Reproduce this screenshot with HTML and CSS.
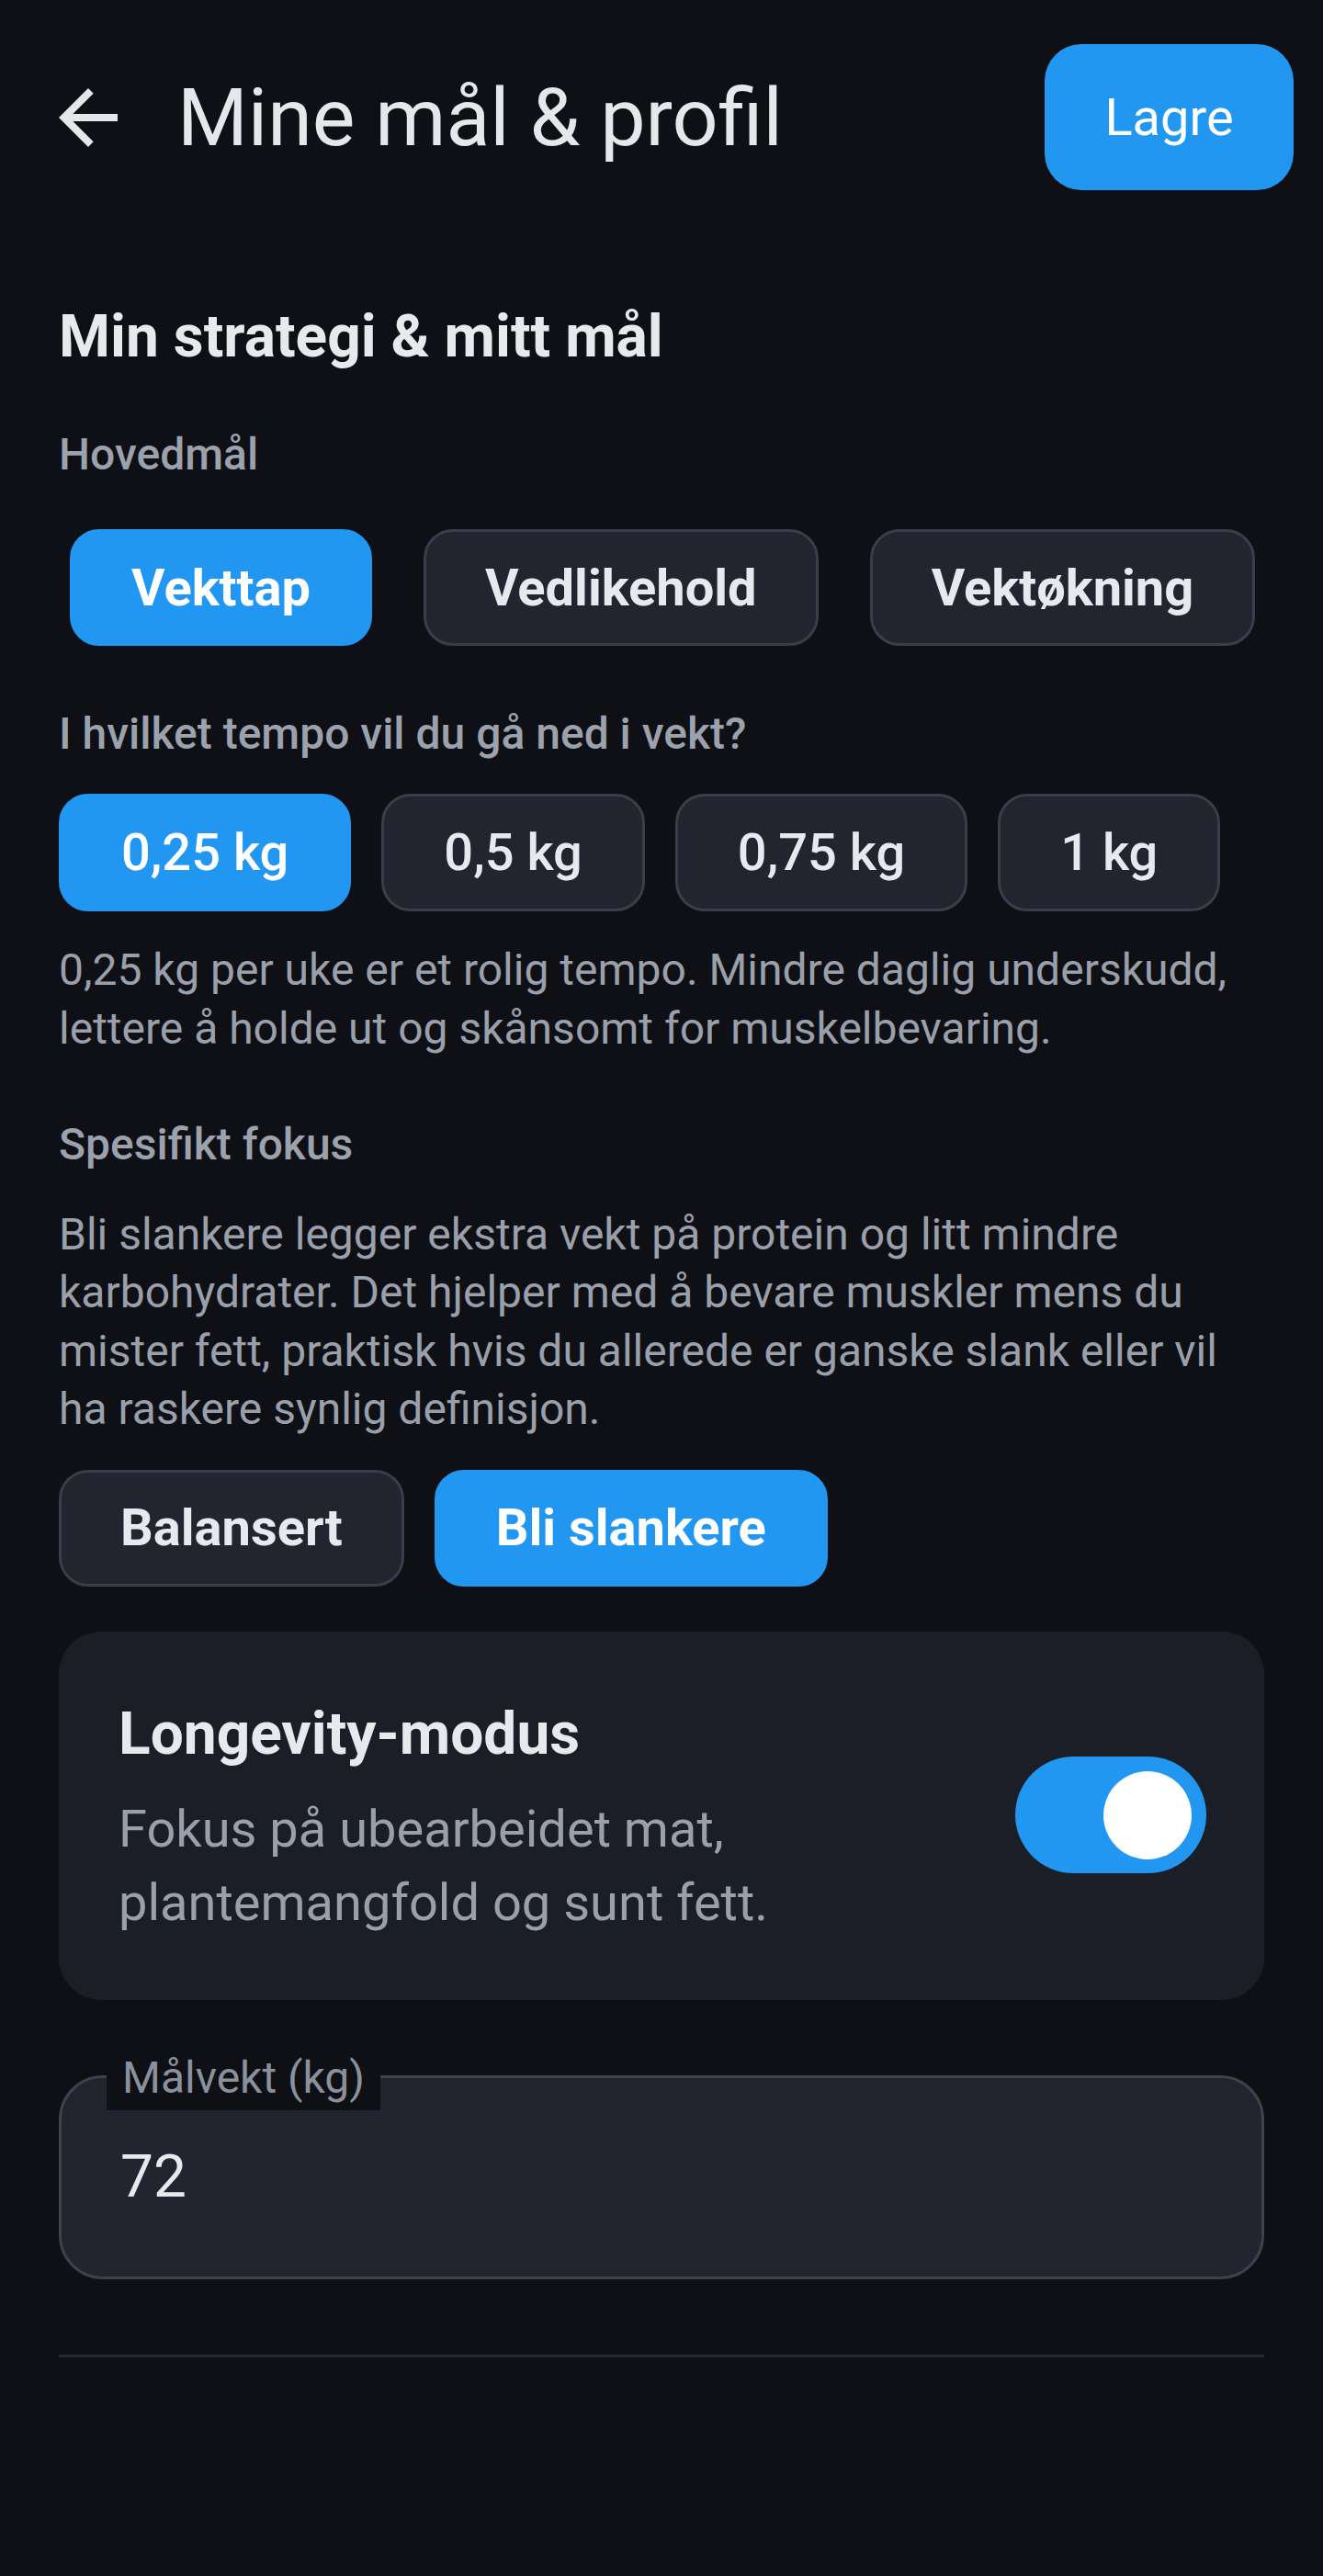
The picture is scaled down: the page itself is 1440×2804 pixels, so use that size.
FILE: index.html
```html
<!DOCTYPE html>
<html lang="no">
<head>
<meta charset="utf-8">
<title>Mine mål &amp; profil</title>
<link rel="stylesheet" href="styles.css">
</head>
<body>
<div class="screen">
  <header class="topbar">
    <button class="back" aria-label="Tilbake">
      <svg viewBox="0 0 24 24" width="96" height="96"><path fill="#e6e7eb" d="M20 11H7.83l5.59-5.59L12 4l-8 8 8 8 1.41-1.41L7.83 13H20v-2z"/></svg>
    </button>
    <h1 class="title">Mine mål &amp; profil</h1>
    <button class="save">Lagre</button>
  </header>

  <main class="content">
    <h2 class="section-title">Min strategi &amp; mitt mål</h2>

    <div class="label label-goal">Hovedmål</div>
    <div class="chips chips-goal">
      <button class="chip chip-bold selected">Vekttap</button>
      <button class="chip chip-bold">Vedlikehold</button>
      <button class="chip chip-bold">Vektøkning</button>
    </div>

    <div class="label label-tempo">I hvilket tempo vil du gå ned i vekt?</div>
    <div class="chips chips-tempo">
      <button class="chip chip-medium selected">0,25 kg</button>
      <button class="chip chip-medium">0,5 kg</button>
      <button class="chip chip-medium">0,75 kg</button>
      <button class="chip chip-medium">1 kg</button>
    </div>
    <p class="help help-tempo">0,25 kg per uke er et rolig tempo. Mindre daglig underskudd, lettere å holde ut og skånsomt for muskelbevaring.</p>

    <div class="label label-focus">Spesifikt fokus</div>
    <p class="help help-focus">Bli slankere legger ekstra vekt på protein og litt mindre karbohydrater. Det hjelper med å bevare muskler mens du mister fett, praktisk hvis du allerede er ganske slank eller vil ha raskere synlig definisjon.</p>
    <div class="chips chips-focus">
      <button class="chip chip-bold">Balansert</button>
      <button class="chip chip-bold selected">Bli slankere</button>
    </div>

    <section class="card">
      <div class="card-text">
        <h3 class="card-title">Longevity-modus</h3>
        <p class="card-desc">Fokus på ubearbeidet mat, plantemangfold og sunt fett.</p>
      </div>
      <div class="switch on"><span class="thumb"></span></div>
    </section>

    <div class="field">
      <span class="field-label">Målvekt (kg)</span>
      <span class="field-value">72</span>
    </div>

    <hr class="divider">
  </main>
</div>
</body>
</html>
```

FILE: styles.css
```css
* { box-sizing: border-box; }
html, body { margin: 0; padding: 0; }
body {
  background: #0f1015;
  font-family: Roboto, "Noto Sans", "Liberation Sans", sans-serif;
  color: #e8e9ed;
  width: 1440px;
  min-height: 2804px;
}
button { font-family: inherit; }

.topbar {
  display: flex;
  align-items: center;
  padding: 48px 32px 0 48px;
}
.back {
  width: 96px;
  height: 96px;
  padding: 0;
  border: 0;
  background: none;
  display: flex;
}
.title {
  flex: 1;
  margin: 0 0 0 49px;
  font-size: 88px;
  font-weight: 400;
  line-height: 102px;
  color: #e6e7eb;
  letter-spacing: 0;
}
.save {
  width: 271px;
  height: 159px;
  border: 0;
  border-radius: 40px;
  background: #2297f2;
  color: #ffffff;
  font-size: 56px;
  font-weight: 400;
  padding: 0;
}

.content {
  padding: 0 64px;
}
.section-title {
  margin: 122px 0 0;
  font-size: 64px;
  font-weight: 700;
  line-height: 76px;
  color: #e8e9ed;
}
.label {
  font-size: 48px;
  font-weight: 500;
  line-height: 56px;
  color: #9ba1ad;
}
.label-goal { margin-top: 62px; }
.label-tempo { margin-top: 68px; }
.label-focus { margin-top: 66px; }

.chips {
  display: flex;
}
.chips-goal { margin-top: 53px; padding-left: 12px; gap: 56px; }
.chips-tempo { margin-top: 37px; gap: 33px; }
.chips-focus { margin-top: 34px; gap: 33px; }

.chip {
  height: 127px;
  padding: 0 64px;
  border: 3px solid #3a3e4a;
  border-radius: 32px;
  background: #222530;
  color: #e8e9ee;
  font-size: 56px;
  line-height: 1;
  white-space: nowrap;
}
.chips-tempo .chip { height: 128px; }
.chip-bold { font-weight: 700; }
.chip-medium { font-weight: 500; padding: 0 65px; }
.chip.selected {
  background: #2297f2;
  border-color: #2297f2;
  color: #ffffff;
}

.help {
  margin: 0;
  font-size: 48px;
  font-weight: 400;
  color: #9aa0ab;
}
.help-tempo { margin-top: 32px; line-height: 64px; }
.help-focus { margin-top: 38px; line-height: 63.4px; }

.card {
  margin-top: 49px;
  background: #1b1e26;
  border-radius: 46px;
  padding: 75px 63px 66px 65px;
  display: flex;
  align-items: center;
  gap: 40px;
}
.card-text { flex: 1; }
.card-title {
  margin: 0;
  font-size: 64px;
  font-weight: 700;
  line-height: 74px;
  color: #e8e9ed;
}
.card-desc {
  margin: 26px 0 0;
  font-size: 56px;
  font-weight: 400;
  line-height: 80px;
  color: #9aa0ab;
}
.switch {
  width: 208px;
  height: 127px;
  border-radius: 64px;
  background: #2297f2;
  display: flex;
  align-items: center;
  justify-content: flex-end;
  padding-right: 16px;
  margin-bottom: 10px;
  flex: none;
}
.thumb {
  width: 96px;
  height: 96px;
  border-radius: 50%;
  background: #ffffff;
}

.field {
  position: relative;
  margin-top: 82px;
  height: 222px;
  border: 3px solid #3e424d;
  border-radius: 48px;
  background: #22252f;
  display: flex;
  align-items: center;
  padding-left: 64px;
}
.field-label {
  position: absolute;
  left: 49px;
  top: -28px;
  height: 63px;
  padding: 0 17px;
  background: #0f1015;
  font-size: 48px;
  line-height: 56px;
  color: #8a909c;
}
.field-value {
  font-size: 64px;
  font-weight: 400;
  color: #e8e9ed;
  line-height: 1;
}

.divider {
  margin: 82px 0 0;
  border: 0;
  height: 3px;
  background: #272a33;
}
```
